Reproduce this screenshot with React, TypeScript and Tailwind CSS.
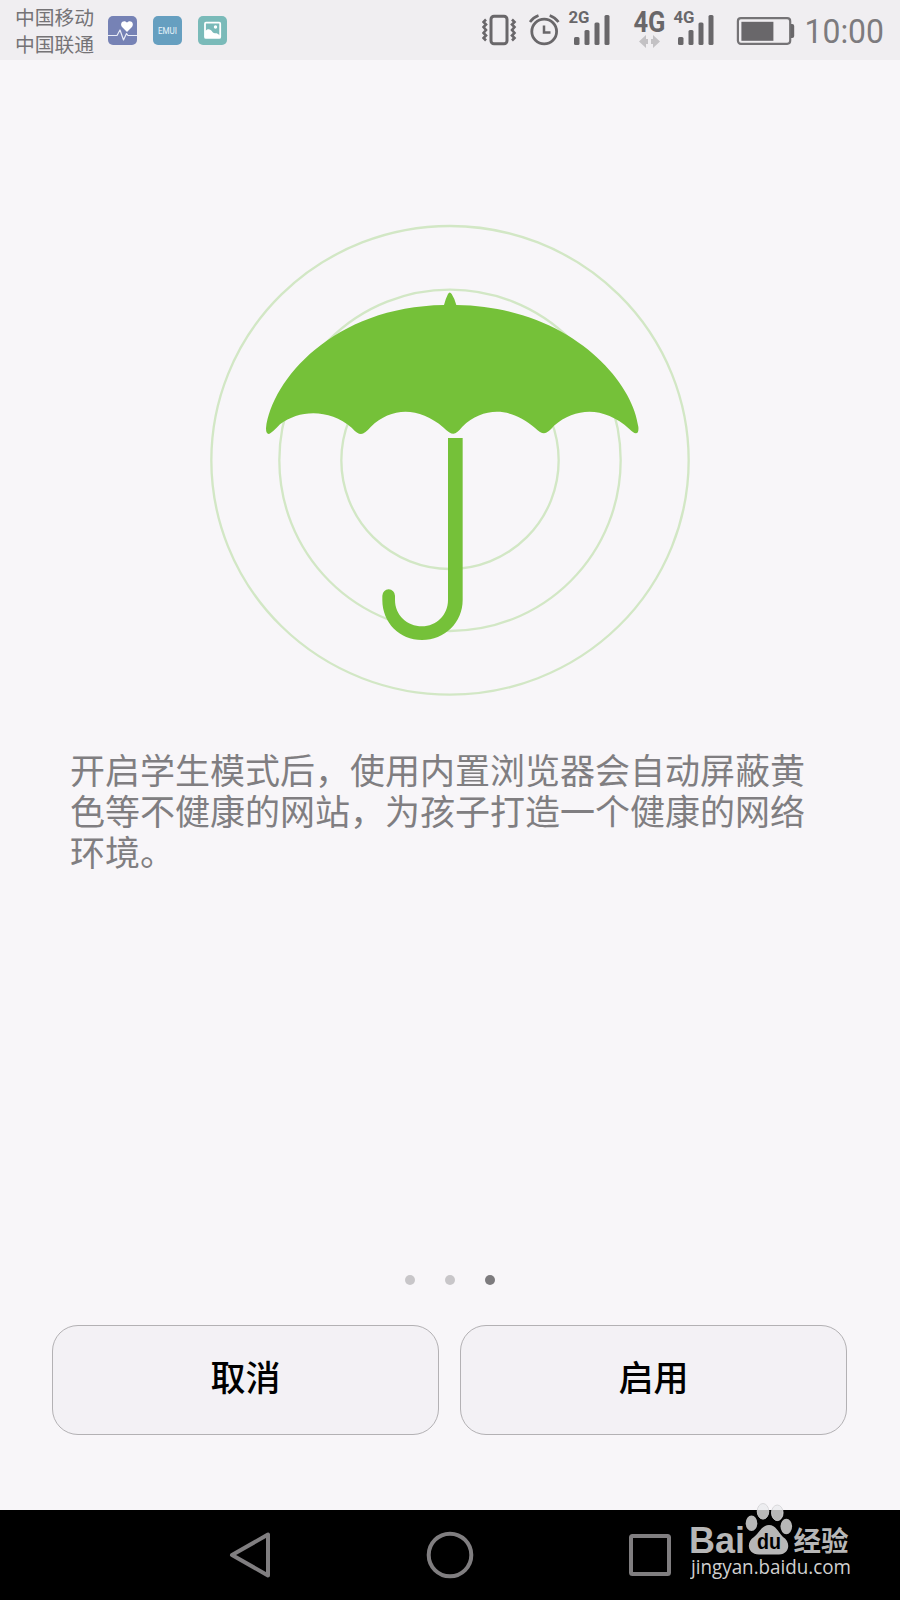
const pages = [0, 1, 2];
const activePage = 2;

const actions = ["取消", "启用"];

function SignalBars() {
  return (
    <g fill="#69676a">
      <rect x="5" y="37" width="5.5" height="8" rx="1.5" />
      <rect x="15.5" y="30" width="5" height="15" rx="1.5" />
      <rect x="25.5" y="22.5" width="5" height="22.5" rx="1.5" />
      <rect x="35.5" y="15" width="5" height="30" rx="1.5" />
    </g>
  );
}

function StatusBar() {
  return (
    <header className="flex h-[60px] shrink-0 items-start bg-[#f0eef1] pl-[15px] text-[#757376]">
      <div className="w-20 pt-[5px] text-[19.8px] leading-[27px] whitespace-nowrap">
        <div>中国移动</div>
        <div>中国联通</div>
      </div>

      {/* Notification icons */}
      <div className="flex gap-4 pt-[15.5px] pl-[13px]">
        <svg width="29" height="29" viewBox="0 0 29 29">
          <rect width="29" height="29" rx="5" fill="#7682b5" />
          <path
            d="M19 16 L14.3 11.2 C11.6 8 14 4.8 16.6 5.2 C18 5.4 18.7 6.2 19 6.8 C19.3 6.2 20 5.4 21.4 5.2 C24 4.8 26.4 8 23.7 11.2 Z"
            fill="#fff"
          />
          <path
            d="M0 19.5 H9 L12 14 L15.5 24 L18.5 17.5 L20 19.5 H29"
            fill="none"
            stroke="#e9ecf7"
            strokeWidth="1.2"
            strokeLinejoin="round"
          />
        </svg>
        <svg width="29" height="29" viewBox="0 0 29 29">
          <rect width="29" height="29" rx="5" fill="#669fc0" />
          <text
            x="5"
            y="17.5"
            fontSize="8.5"
            textLength="19"
            lengthAdjust="spacingAndGlyphs"
            fill="#e6f3fa"
          >
            EMUI
          </text>
        </svg>
        <svg width="29" height="29" viewBox="0 0 29 29">
          <rect width="29" height="29" rx="5" fill="#7abab9" />
          <rect x="7" y="6.7" width="15.2" height="15.2" rx="1" fill="none" stroke="#fff" strokeWidth="1.8" />
          <path d="M7 15.5 C10 11.8 12.5 13.5 14.5 16 C16.5 18.3 18.5 15.8 22 19.5 V22 H7 Z" fill="#fff" />
          <circle cx="17.5" cy="11" r="1.7" fill="#fff" />
        </svg>
      </div>

      {/* System icons */}
      <div className="ml-auto flex w-[418px]">
        <svg width="46" height="60" viewBox="0 0 46 60" fill="none" stroke="#69676a">
          <rect x="9" y="16.3" width="16" height="27.4" rx="3" strokeWidth="3" />
          <path
            d="M4 19.5 L1.5 22 L4 24.5 L1.5 27 L4 30 L1.5 33 L4 35.5 L1.5 38 L4 40.5"
            strokeWidth="2.6"
          />
          <path
            d="M30 19.5 L32.5 22 L30 24.5 L32.5 27 L30 30 L32.5 33 L30 35.5 L32.5 38 L30 40.5"
            strokeWidth="2.6"
          />
        </svg>
        <svg width="39" height="60" viewBox="0 0 39 60" fill="none" stroke="#69676a">
          <circle cx="16.2" cy="31.5" r="12.4" strokeWidth="2.8" />
          <path d="M16 25.5 V32.5 H22.5" strokeWidth="2.5" />
          <path d="M2 22 Q5 17.5 10.5 15.5 M21.7 15.5 Q27.2 17.5 30.5 22" strokeWidth="2.6" />
        </svg>
        <svg width="66" height="60" viewBox="-2 0 66 60">
          <text x="-0.5" y="22.5" fontSize="16.5" textLength="21" lengthAdjust="spacingAndGlyphs" className="font-[Roboto] font-bold" fill="#69676a">
            2G
          </text>
          <SignalBars />
        </svg>
        <svg width="38" height="60" viewBox="0 0 38 60">
          <text x="0.5" y="32" fontSize="29.5" textLength="32" lengthAdjust="spacingAndGlyphs" className="font-[Roboto] font-bold" fill="#69676a">
            4G
          </text>
          <g fill="#c3c1c4">
            <path d="M6 41.5 L13 35 V39 H15 V44 H13 V48 Z" />
            <path d="M27 41.5 L20 35 V39 H18 V44 H20 V48 Z" />
          </g>
        </svg>
        <svg width="65" height="60" viewBox="-2 0 65 60">
          <text x="0.5" y="22.5" fontSize="16.5" textLength="21" lengthAdjust="spacingAndGlyphs" className="font-[Roboto] font-bold" fill="#69676a">
            4G
          </text>
          <SignalBars />
        </svg>
        <svg width="69" height="60" viewBox="-0.7 0 69 60">
          <rect x="1.2" y="18.2" width="52.3" height="25.6" rx="3" fill="none" stroke="#757376" strokeWidth="2.2" />
          <rect x="4.7" y="21.8" width="32" height="19" fill="#69676a" />
          <path d="M54 24 H55.5 Q57.5 24 57.5 26 V36 Q57.5 38 55.5 38 H54 Z" fill="#69676a" />
        </svg>
        <svg width="82" height="60" viewBox="0 0 82 60">
          <text x="-0.5" y="42.6" fontSize="33" textLength="79.5" lengthAdjust="spacingAndGlyphs" className="font-[Roboto]" fill="#7d7b7e">
            10:00
          </text>
        </svg>
      </div>
    </header>
  );
}

function Umbrella() {
  return (
    <svg width="500" height="500" viewBox="0 0 1500 1500" className="mx-auto">
      <g fill="none" stroke="#d2e7c5" strokeWidth="7">
        <ellipse cx="750" cy="751" rx="716" ry="703" />
        <circle cx="750" cy="751" r="512" />
        <circle cx="750" cy="751" r="326" />
      </g>
      {/* Canopy with its tip and four scallops */}
      <path
        d="M732 285 Q738 263 744 252 Q749 243 755 252 Q763 264 769 285
           C1105 290 1298 510 1315 650 Q1317 671 1307 670 Q1300 669 1288 657
           C1214 590 1130 590 1062 647 Q1044 669 1032 670 Q1021 670 1006 655
           C933 590 851 590 787 650 Q771 670 760 671 Q749 671 731 653
           C657 590 575 590 512 651 Q495 671 483 672 Q472 672 455 653
           C390 597 300 597 240 643 Q218 667 207 672 Q198 673 198 655
           C215 510 400 290 732 285 Z"
        fill="#75c139"
      />
      <path
        d="M744 684 H788 V1170 C788 1238 734 1290 666 1290 C598 1290 547 1238 547 1170 V1157 A19 19 0 0 1 585 1157 V1170 C585 1215 621 1249 666 1249 C709 1249 744 1215 744 1170 Z"
        fill="#75c139"
      />
    </svg>
  );
}

function Watermark() {
  return (
    <svg width="180" height="110" viewBox="0 0 180 110" className="absolute right-[30px] bottom-0">
      <g fill="#b7b7b7">
        <ellipse cx="61.5" cy="33.3" rx="5.8" ry="7.7" />
        <ellipse cx="96.3" cy="36.5" rx="5.8" ry="7.7" />
        <path d="M79 35 C86 35 88 42 93 47 C101 52 100 64 89 64.5 H69 C57 64 56 52 64 47 C70 42 72 35 79 35 Z" />
      </g>
      <g fill="#ededf0" stroke="#d2d2d4" strokeWidth="0.8">
        <ellipse cx="73" cy="21.3" rx="5.8" ry="7.8" />
        <ellipse cx="87.3" cy="22.8" rx="5.8" ry="7.8" />
      </g>
      <g fill="#b7b7b7">
        <path d="M67.2 20 H78.8 C79.3 25 76 29.3 73 29.3 C70 29.3 66.7 25 67.2 20 Z" />
        <path d="M82 20 H92.6 C93.5 26 90 30.8 87.3 30.8 C84 30.8 81 26 82 20 Z" />
      </g>
      <text x="-1" y="63" fontSize="37" textLength="56" lengthAdjust="spacingAndGlyphs" className="font-['Liberation_Sans'] font-bold" fill="#b7b7b7">
        Bai
      </text>
      <text x="67" y="59" fontSize="22" textLength="24" lengthAdjust="spacingAndGlyphs" className="font-['Liberation_Sans'] font-bold" fill="#000">
        du
      </text>
      <text x="103.5" y="61" fontSize="27.5" textLength="55" lengthAdjust="spacingAndGlyphs" className="font-bold" fill="#b7b7b7">
        经验
      </text>
      <text x="1" y="84" fontSize="19.5" textLength="160" lengthAdjust="spacingAndGlyphs" className="font-['Open_Sans'] font-medium" fill="#d0d0d0">
        jingyan.baidu.com
      </text>
    </svg>
  );
}

export default function App() {
  return (
    <div className="relative flex h-[1600px] w-[900px] flex-col overflow-hidden bg-[#f8f6f9] font-['Roboto','Noto_Sans_CJK_SC',sans-serif]">
      <StatusBar />

      <main className="flex flex-1 flex-col pt-[150px]">
        <Umbrella />

        <p className="mt-[38px] ml-[70px] w-[736px] font-['Noto_Sans_CJK_SC',sans-serif] text-[35px] leading-[41px] text-[#807e81]">
          开启学生模式后，使用内置浏览器会自动屏蔽黄色等不健康的网站，为孩子打造一个健康的网络环境。
        </p>

        <div className="mt-auto flex justify-center gap-[30px]">
          {pages.map((page) => (
            <span
              key={page}
              className={`size-[10px] rounded-full ${page === activePage ? "bg-[#7d7b7e]" : "bg-[#c8c6c9]"}`}
            />
          ))}
        </div>

        <div className="mt-10 mb-[75px] flex gap-[21px] pr-[53px] pl-[52px]">
          {actions.map((label) => (
            <button
              key={label}
              className="h-[110px] flex-1 rounded-[26px] border border-[#b3b1b4] bg-[#f3f1f5] pt-px text-[35px] font-medium text-black"
            >
              {label}
            </button>
          ))}
        </div>
      </main>

      {/* Navigation bar */}
      <nav className="flex h-[90px] shrink-0 items-center bg-black pl-[229px]">
        <svg width="43" height="48" viewBox="0 0 43 48" fill="none" stroke="#807e80" strokeWidth="4" strokeLinejoin="round">
          <path d="M3 24 L39 3.5 V44.5 Z" />
        </svg>
        <svg width="48" height="48" viewBox="0 0 48 48" fill="none" stroke="#807e80" strokeWidth="4" className="ml-[154px]">
          <circle cx="24" cy="24" r="21.3" />
        </svg>
        <svg width="44" height="44" viewBox="0 0 44 44" fill="none" stroke="#807e80" strokeWidth="4" className="ml-[154px]">
          <rect x="3" y="3" width="38" height="38" rx="1.5" />
        </svg>
      </nav>

      <Watermark />
    </div>
  );
}
